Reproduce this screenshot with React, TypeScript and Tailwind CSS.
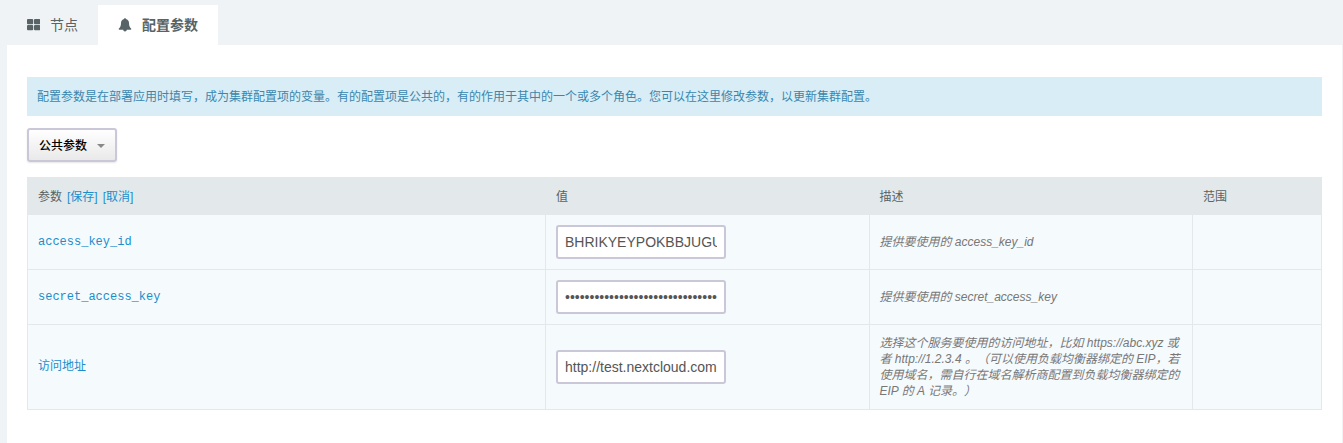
import { useState } from "react";

type Param = {
  name: string;
  mono: boolean;
  type: "text" | "password";
  value: string;
  description: string;
};

const params: Param[] = [
  {
    name: "access_key_id",
    mono: true,
    type: "text",
    value: "BHRIKYEYPOKBBJUGUXQA",
    description: "提供要使用的 access_key_id",
  },
  {
    name: "secret_access_key",
    mono: true,
    type: "password",
    value: "0000000000000000000000000000000000000000",
    description: "提供要使用的 secret_access_key",
  },
  {
    name: "访问地址",
    mono: false,
    type: "text",
    value: "http://test.nextcloud.com",
    description:
      "选择这个服务要使用的访问地址，比如 https://abc.xyz 或者 http://1.2.3.4 。（可以使用负载均衡器绑定的 EIP，若使用域名，需自行在域名解析商配置到负载均衡器绑定的 EIP 的 A 记录。）",
  },
];

function GridIcon() {
  return (
    <svg className="h-3 w-[13px]" viewBox="0 0 13 12" fill="currentColor" aria-hidden="true">
      <rect x="0" y="0" width="6.2" height="5.2" rx="1" />
      <rect x="7" y="0" width="6.2" height="5.2" rx="1" />
      <rect x="0" y="6" width="6.2" height="5.2" rx="1" />
      <rect x="7" y="6" width="6.2" height="5.2" rx="1" />
    </svg>
  );
}

function BellIcon() {
  return (
    <svg className="h-[14px] w-[14px]" viewBox="0 0 14 14" fill="currentColor" aria-hidden="true">
      <path d="M7 0c.5 0 .8.3.8.8v.3c2 .4 3.2 2 3.2 3.900 0 3 .8 4.600 2.300 5.800 0 .6-.4 1-1 1H8.800a1.800 1.800 0 0 1-3.600 0H1.700c-.6 0-1-.4-1-1C2.200 9.600 3 8 3 5c0-1.900 1.200-3.500 3.200-3.900v-.3c0-.5.3-.8.8-.8z" />
    </svg>
  );
}

export default function App() {
  const [values, setValues] = useState(params.map((p) => p.value));

  return (
    <div className="flex min-h-screen flex-col bg-[#eff3f6] pt-[5px] pr-px pl-[7px] font-['Liberation_Sans','Noto_Sans_CJK_SC',sans-serif] text-xs text-[#576366] [text-spacing-trim:space-all]">
      <nav className="flex text-sm leading-5">
        <a href="#nodes" className="flex h-10 items-center gap-2.5 px-5">
          <GridIcon />
          节点
        </a>
        <a href="#params" className="flex h-10 items-center gap-2.5 bg-white px-5 font-bold">
          <BellIcon />
          配置参数
        </a>
      </nav>

      <main className="grow bg-white px-5 pt-8 pb-8">
        <p className="bg-[#d9edf7] px-2.5 pt-2.5 pb-2 leading-[21px] text-[#3a87ad]">
          配置参数是在部署应用时填写，成为集群配置项的变量。有的配置项是公共的，有的作用于其中的一个或多个角色。您可以在这里修改参数，以更新集群配置。
        </p>

        <button
          type="button"
          className="mt-3 flex h-[34px] items-center gap-2.5 rounded-[3px] border-2 border-[#c9c7d8] bg-linear-to-b from-white to-[#e9e9e9] px-2.5 pt-0.5 font-medium text-black shadow-[0_1px_2px_rgba(0,0,0,0.1)]"
        >
          公共参数
          <span className="border-x-4 border-t-4 border-x-transparent border-t-[#888888]" />
        </button>

        <table className="mt-[15px] w-full table-fixed border-separate border-spacing-0 border-r border-b border-[#e3e9eb] text-left">
          <thead className="bg-[#e3e9eb]">
            <tr className="h-[37px]">
              <th className="border-l border-[#e3e9eb] px-2.5 pt-0.5 font-normal">
                <div className="flex gap-[5px]">
                  参数
                  <a href="#save" className="text-[#1c8dcb]">[保存]</a>
                  <a href="#cancel" className="text-[#1c8dcb]">[取消]</a>
                </div>
              </th>
              <th className="w-[25%] border-l border-[#e3e9eb] px-2.5 pt-0.5 font-normal">值</th>
              <th className="w-[25%] border-l border-[#e3e9eb] px-2.5 pt-0.5 font-normal">描述</th>
              <th className="w-[129px] border-l border-[#e3e9eb] px-2.5 pt-0.5 font-normal">范围</th>
            </tr>
          </thead>
          <tbody className="bg-[#f5fafd]">
            {params.map((p, i) => (
              <tr key={p.name}>
                <td className="border-t border-l border-[#e3e9eb] px-2.5 pb-0.5 text-[#1c8dcb]">
                  <label
                    htmlFor={`param-${i}`}
                    className={p.mono ? "font-['Liberation_Mono',monospace]" : ""}
                  >
                    {p.name}
                  </label>
                </td>
                <td className="border-t border-l border-[#e3e9eb] px-2.5">
                  <input
                    id={`param-${i}`}
                    type={p.type}
                    value={values[i]}
                    onChange={(e) => setValues(values.map((v, j) => (j === i ? e.target.value : v)))}
                    className="my-2.5 block h-[34px] w-[170px] rounded-[3px] border-2 border-[#c9c7d8] bg-white px-[7px] text-sm text-[#555555]"
                  />
                </td>
                <td className="border-t border-l border-[#e3e9eb] px-2.5 py-2.5 leading-4 text-[#777777] italic">
                  {p.description}
                </td>
                <td className="border-t border-l border-[#e3e9eb] px-2.5" />
              </tr>
            ))}
          </tbody>
        </table>
      </main>
    </div>
  );
}
